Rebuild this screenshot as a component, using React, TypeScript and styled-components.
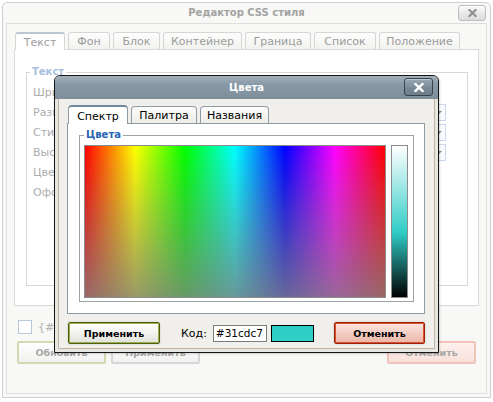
import React from "react";
import styled, { createGlobalStyle } from "styled-components";

const Global = createGlobalStyle`
  html, body { margin: 0; padding: 0; background: #ffffff; }
  body { font-family: "DejaVu Sans", Verdana, sans-serif; font-size: 11px; color: #000; }
  * { box-sizing: border-box; }
`;

const Stage = styled.div`
  position: relative;
  width: 493px;
  height: 402px;
  overflow: hidden;
  padding: 2px 0 0 2px;
`;

/* ---------- background editor window (faded) ---------- */

const Window = styled.div`
  width: 489px;
  height: 396px;
  border: 1px solid #cfcfcf;
  border-radius: 5px 5px 0 0;
  background: #f8f8f6;
  padding: 0 3px 3px 3px;
  display: flex;
  flex-direction: column;
`;

const WinTitle = styled.div`
  height: 20px;
  display: grid;
  grid-template-columns: 1fr auto 1fr;
  align-items: center;
  font-size: 10px;
  font-weight: bold;
  color: #a3a3a3;
`;

const TitleText = styled.div`
  grid-column: 2;
  line-height: 12px;
`;

const CloseBtn = styled.div<{ $dark?: boolean }>`
  grid-column: 3;
  justify-self: end;
  align-self: start;
  width: ${(p) => (p.$dark ? 29 : 28)}px;
  height: ${(p) => (p.$dark ? 18 : 16)}px;
  margin-top: 2px;
  margin-right: ${(p) => (p.$dark ? 5 : 1)}px;
  border: 1px solid ${(p) => (p.$dark ? "#36424c" : "#bdbdbd")};
  border-radius: 3px;
  background: ${(p) =>
    p.$dark
      ? "linear-gradient(#9aa8b3, #7a8a97 55%, #6d7d8a)"
      : "linear-gradient(#fbfbfb, #e6e6e6 60%, #dcdcdc)"};
  box-shadow: ${(p) =>
    p.$dark ? "inset 0 1px 0 rgba(255,255,255,0.35)" : "inset 0 1px 0 #fff"};
  display: flex;
  align-items: center;
  justify-content: center;
`;

const Frame = styled.div`
  flex: 1;
  border: 1px solid #dedede;
  padding: 8px 7px 0 7px;
  display: flex;
  flex-direction: column;
`;

const BgTabRow = styled.div`
  display: flex;
  align-items: flex-end;
  gap: 3px;
  padding-left: 1px;
  margin-bottom: -1px;
  position: relative;
  z-index: 1;
`;

const BgTab = styled.div<{ $active?: boolean; $w: number }>`
  width: ${(p) => p.$w}px;
  height: ${(p) => (p.$active ? 18 : 17)}px;
  margin-bottom: ${(p) => (p.$active ? 0 : 1)}px;
  border: 1px solid #d6d6d6;
  border-top: ${(p) => (p.$active ? "2px solid #bcc6d0" : "1px solid #d6d6d6")};
  border-bottom: none;
  border-radius: 3px 3px 0 0;
  background: ${(p) => (p.$active ? "#ffffff" : "linear-gradient(#fdfdfc, #f2f2ef)")};
  color: #9c9c9c;
  font-size: 11px;
  display: flex;
  align-items: center;
  justify-content: center;
  white-space: nowrap;
`;

const BgPanel = styled.div`
  height: 257px;
  border: 1px solid #d9d9d9;
  background: #ffffff;
  padding: 16px 10px 0 11px;
`;

const BgGroup = styled.fieldset`
  margin: 0;
  min-width: 0;
  height: 220px;
  border: 1px solid #d8d8d8;
  padding: 4px 6px 0 3px;
`;

const BgLegend = styled.legend`
  padding: 0 2px;
  font-size: 10px;
  line-height: 12px;
  font-weight: bold;
  color: #a6c0e0;
`;

const BgRow = styled.div`
  height: 20px;
  display: flex;
  align-items: center;
  padding-left: 3px;
`;

const BgLabel = styled.div`
  color: #adadad;
  font-size: 11px;
  white-space: nowrap;
`;

const BgSelect = styled.div`
  margin-left: auto;
  margin-right: 15px;
  width: 300px;
  height: 17px;
  border: 1px solid #cad7ee;
  background: #fbfcff;
  display: flex;
  align-items: center;
  justify-content: flex-end;
  padding-right: 3px;
`;

const Arrow = styled.div`
  width: 0;
  height: 0;
  border-left: 3px solid transparent;
  border-right: 3px solid transparent;
  border-top: 3px solid #8a8a8a;
`;

const CheckRow = styled.div`
  margin-top: 14px;
  padding-left: 4px;
  display: flex;
  align-items: center;
  gap: 6px;
  height: 14px;
`;

const CheckBox = styled.div`
  width: 14px;
  height: 14px;
  border: 1px solid #b6c8da;
  background: #fff;
`;

const CheckText = styled.div`
  color: #b3b3b3;
  font-size: 11px;
  white-space: nowrap;
`;

const BgButtons = styled.div`
  margin-top: 7px;
  padding: 0 3px;
  display: flex;
  gap: 5px;
`;

const BgButton = styled.div<{ $kind: "ok" | "plain" | "cancel"; $right?: boolean }>`
  width: 89px;
  height: 23px;
  margin-left: ${(p) => (p.$right ? "auto" : "0")};
  border: 2px solid
    ${(p) => (p.$kind === "ok" ? "#d3dab0" : p.$kind === "cancel" ? "#f2c3ba" : "#d6d6d6")};
  border-radius: 2px;
  background: ${(p) =>
    p.$kind === "cancel"
      ? "linear-gradient(#fdf1ee, #f8e0da)"
      : "linear-gradient(#ffffff, #f1f1ef)"};
  color: #a8a8a8;
  font-size: 9.5px;
  font-weight: bold;
  display: flex;
  align-items: center;
  justify-content: center;
`;

/* ---------- foreground colour dialog ---------- */

const Dialog = styled.div`
  position: absolute;
  left: 54px;
  top: 75px;
  width: 385px;
  height: 278px;
  border: 1px solid #151515;
  border-radius: 6px 6px 0 0;
  background: #e8e6e1;
  padding: 0 3px 3px 3px;
  display: flex;
  flex-direction: column;
  box-shadow: 1px 1px 2px rgba(0, 0, 0, 0.15);
`;

const DialogTitle = styled.div`
  height: 23px;
  margin: 0 -3px;
  border-radius: 5px 5px 0 0;
  background: linear-gradient(#a2afba, #8898a5 40%, #7e8e9b);
  display: grid;
  grid-template-columns: 1fr auto 1fr;
  align-items: center;
  color: #ffffff;
  font-size: 10px;
  font-weight: bold;
`;

const Body = styled.div`
  flex: 1;
  background: #f0efeb;
  border: 1px solid #c2b2a2;
  border-top: none;
  padding: 6px 9px 4px 8px;
  display: flex;
  flex-direction: column;
`;

const TabRow = styled.div`
  display: flex;
  align-items: flex-end;
  gap: 3px;
  padding-left: 1px;
  margin-bottom: -1px;
  position: relative;
  z-index: 1;
`;

const Tab = styled.div<{ $active?: boolean; $w: number }>`
  width: ${(p) => p.$w}px;
  height: ${(p) => (p.$active ? 19 : 17)}px;
  margin-bottom: ${(p) => (p.$active ? 0 : 1)}px;
  border: 1px solid #8f9ba3;
  border-top: ${(p) => (p.$active ? "2px solid #6e889e" : "1px solid #8f9ba3")};
  border-bottom: none;
  border-radius: 4px 4px 0 0;
  background: ${(p) => (p.$active ? "#ffffff" : "linear-gradient(#fcfcfa, #eeede8)")};
  font-size: 11px;
  color: #000;
  display: flex;
  align-items: center;
  justify-content: center;
  padding-top: ${(p) => (p.$active ? 1 : 0)}px;
`;

const Panel = styled.div`
  border: 1px solid #8f9ba3;
  background: #ffffff;
  padding: 5px 10px 11px 11px;
`;

const Group = styled.fieldset`
  margin: 0;
  min-width: 0;
  border: 1px solid #9ba3a7;
  padding: 4px 5px 3px 4px;
`;

const Legend = styled.legend`
  padding: 0 2px;
  font-size: 10px;
  line-height: 12px;
  font-weight: bold;
  color: #2764b2;
`;

const PickArea = styled.div`
  display: flex;
  gap: 5px;
`;

const Spectrum = styled.div`
  width: 302px;
  height: 153px;
  border: 1px solid #8c8c8c;
  background: linear-gradient(to bottom, rgba(128, 128, 128, 0) 0%, rgba(128, 128, 128, 0.8) 100%),
    linear-gradient(
      to right,
      #ff0000 0%,
      #ffff00 16.67%,
      #00ff00 33.33%,
      #00ffff 50%,
      #0000ff 66.67%,
      #ff00ff 83.33%,
      #ff0000 100%
    );
`;

const Shade = styled.div<{ $c: string }>`
  width: 17px;
  height: 153px;
  border: 1px solid #8c8c8c;
  background: linear-gradient(#ffffff 0%, ${(p) => p.$c} 57%, #000000 100%);
`;

const BottomRow = styled.div`
  margin-top: 8px;
  padding-left: 1px;
  display: flex;
  align-items: center;
`;

const Button = styled.div<{ $kind: "ok" | "cancel"; $w: number }>`
  width: ${(p) => p.$w}px;
  height: 22px;
  border: 1px solid ${(p) => (p.$kind === "ok" ? "#4f5f12" : "#9c2106")};
  border-radius: 2px;
  box-shadow: inset 0 0 0 1px ${(p) => (p.$kind === "ok" ? "#9aae4c" : "#d9512e")},
    0 0 2px rgba(0, 0, 0, 0.18);
  background: ${(p) =>
    p.$kind === "ok"
      ? "linear-gradient(#ffffff, #f3f3ef 50%, #e2e2dc)"
      : "linear-gradient(#fbe7e1, #f3cbc0 55%, #ebb6a8)"};
  font-size: 9.5px;
  font-weight: bold;
  color: #000;
  display: flex;
  align-items: center;
  justify-content: center;
  margin-left: ${(p) => (p.$kind === "cancel" ? "auto" : "0")};
`;

const CodeLabel = styled.div`
  margin-left: 21px;
  font-size: 11px;
  color: #000;
`;

const CodeInput = styled.input`
  width: 54px;
  height: 17px;
  margin-left: 6px;
  border: 1px solid #7b7b7b;
  background: #ffffff;
  padding: 0 2px;
  font-family: "DejaVu Sans", Verdana, sans-serif;
  font-size: 10.5px;
  color: #000;
  outline: none;
`;

const Swatch = styled.div<{ $c: string }>`
  width: 43px;
  height: 17px;
  margin-left: 4px;
  border: 1px solid #000;
  background: ${(p) => p.$c};
`;

const XIcon = ({ color, size }: { color: string; size: number }) => (
  <svg width={size} height={size - 1} viewBox="0 0 10 9">
    <path d="M1.5 1 L8.5 8 M8.5 1 L1.5 8" stroke={color} strokeWidth="2.4" strokeLinecap="square" />
  </svg>
);

const bgTabs = [
  { t: "Текст", w: 50, a: true },
  { t: "Фон", w: 42 },
  { t: "Блок", w: 47 },
  { t: "Контейнер", w: 79 },
  { t: "Граница", w: 66 },
  { t: "Список", w: 62 },
  { t: "Положение", w: 81 },
];

const bgRows = [
  { l: "Шрифт:", s: false },
  { l: "Размер:", s: true },
  { l: "Стиль:", s: true },
  { l: "Высота:", s: true },
  { l: "Цвет:", s: false },
  { l: "Оформление:", s: false },
];

const color = "#31cdc7";

export default function App() {
  return (
    <>
      <Global />
      <Stage>
        <Window>
          <WinTitle>
            <TitleText>Редактор CSS стиля</TitleText>
            <CloseBtn>
              <XIcon color="#8f8f8f" size={9} />
            </CloseBtn>
          </WinTitle>
          <Frame>
            <BgTabRow>
              {bgTabs.map((t) => (
                <BgTab key={t.t} $w={t.w} $active={t.a}>
                  {t.t}
                </BgTab>
              ))}
            </BgTabRow>
            <BgPanel>
              <BgGroup>
                <BgLegend>Текст</BgLegend>
                {bgRows.map((r) => (
                  <BgRow key={r.l}>
                    <BgLabel>{r.l}</BgLabel>
                    {r.s && (
                      <BgSelect>
                        <Arrow />
                      </BgSelect>
                    )}
                  </BgRow>
                ))}
              </BgGroup>
            </BgPanel>
            <CheckRow>
              <CheckBox />
              <CheckText>{"{#"}</CheckText>
            </CheckRow>
            <BgButtons>
              <BgButton $kind="ok">Обновить</BgButton>
              <BgButton $kind="plain">Применить</BgButton>
              <BgButton $kind="cancel" $right>
                Отменить
              </BgButton>
            </BgButtons>
          </Frame>
        </Window>

        <Dialog>
          <DialogTitle>
            <TitleText>Цвета</TitleText>
            <CloseBtn $dark>
              <XIcon color="#ffffff" size={10} />
            </CloseBtn>
          </DialogTitle>
          <Body>
            <TabRow>
              <Tab $w={60} $active>
                Спектр
              </Tab>
              <Tab $w={66}>Палитра</Tab>
              <Tab $w={69}>Названия</Tab>
            </TabRow>
            <Panel>
              <Group>
                <Legend>Цвета</Legend>
                <PickArea>
                  <Spectrum />
                  <Shade $c={color} />
                </PickArea>
              </Group>
            </Panel>
            <BottomRow>
              <Button $kind="ok" $w={92}>
                Применить
              </Button>
              <CodeLabel>Код:</CodeLabel>
              <CodeInput value={color} readOnly />
              <Swatch $c={color} />
              <Button $kind="cancel" $w={91}>
                Отменить
              </Button>
            </BottomRow>
          </Body>
        </Dialog>
      </Stage>
    </>
  );
}
